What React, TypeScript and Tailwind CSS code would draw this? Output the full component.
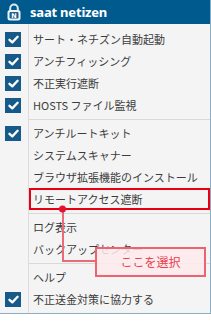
import React from 'react';

type Item = { label: string; checked?: boolean; marked?: boolean };

const GROUPS: Item[][] = [
  [
    { label: 'サート・ネチズン自動起動', checked: true },
    { label: 'アンチフィッシング', checked: true },
    { label: '不正実行遮断', checked: true },
    { label: 'HOSTS ファイル監視', checked: true },
  ],
  [
    { label: 'アンチルートキット', checked: true },
    { label: 'システムスキャナー' },
    { label: 'ブラウザ拡張機能のインストール' },
    { label: 'リモートアクセス遮断', marked: true },
  ],
  [{ label: 'ログ表示' }, { label: 'バックアップセンター' }],
  [{ label: 'ヘルプ' }, { label: '不正送金対策に協力する', checked: true }],
];

function Check() {
  return (
    <div className="w-[16px] h-[15px] bg-[#165a89] flex items-center justify-center">
      <svg width="11" height="11" viewBox="0 0 11 11">
        <polyline points="1.5,5.8 4.3,8.4 9.6,2.8" fill="none" stroke="#fff" strokeWidth="2.3" strokeLinecap="round" strokeLinejoin="round" />
      </svg>
    </div>
  );
}

function Logo() {
  return (
    <svg width="14" height="18" viewBox="0 0 14 18">
      {/* shackle */}
      <path d="M3.2 8 V5.4 a3.8 3.8 0 0 1 7.6 0 V8" fill="none" stroke="#dfe8ef" strokeWidth="2" />
      {/* body */}
      <rect x="0.5" y="7" width="13" height="10.5" rx="2.5" fill="#eef3f7" />
      <rect x="2.5" y="9" width="9" height="6.5" rx="1" fill="#1d5f8e" />
      <text x="7" y="14.6" textAnchor="middle" fontSize="6.5" fontWeight="700" fill="#ffffff" fontFamily="'DejaVu Sans', sans-serif">N</text>
    </svg>
  );
}

export default function App() {
  return (
    <div className="relative w-[211px] h-[333px] bg-white" style={{ fontFamily: "'Noto Sans CJK JP', 'Noto Sans', sans-serif" }}>
      <div className="w-[211px] bg-[#f4f4f4] border-r border-b border-[#8aaec6]">
        {/* ── Header ─────────────────────────────── */}
        <div className="h-[24px] bg-[#005a8e] flex items-center pl-[7px] gap-[9px]">
          <Logo />
          <span className="text-white text-[13px] font-bold leading-none font-['Noto_Sans',sans-serif] tracking-[-0.2px]">saat netizen</span>
        </div>

        {/* ── Menu body ──────────────────────────── */}
        <div className="pt-[4px] pb-[3px] bg-[linear-gradient(to_right,transparent_28px,#dcdcdc_28px,#dcdcdc_29px,transparent_29px)]">
          {GROUPS.map((group, gi) => (
            <div key={gi}>
              {gi > 0 && (
                <div className="h-[6px] flex items-center pl-[29px]">
                  <div className="h-px w-full bg-[#d9d9d9]" />
                </div>
              )}
              {group.map((item) => (
                <div key={item.label} className="flex h-[22px]">
                  <div className="w-[29px] flex items-center pl-[5px]">{item.checked && <Check />}</div>
                  <div
                    className={`flex-1 flex items-center pl-[4px] text-[11px] text-[#3c3c3c] whitespace-nowrap ${
                      item.marked ? 'outline-2 outline-solid outline-[#e60012] -outline-offset-2' : ''
                    }`}
                  >
                    {item.label}
                  </div>
                </div>
              ))}
            </div>
          ))}
        </div>
      </div>

      {/* ── Annotation ─────────────────────────── */}
      <svg className="absolute left-0 top-0 pointer-events-none" width="211" height="333">
        <path d="M63 211 V261 H96" fill="none" stroke="#ea6b77" strokeWidth="2" />
        <circle cx="62.5" cy="209" r="3.5" fill="#e3132f" />
      </svg>
      <div className="absolute left-[95px] top-[247px] w-[111px] h-[30px] border-2 border-[#ec6470] bg-[#fdeaec]/85 flex items-center justify-center text-[12px] text-[#e8404e]">
        ここを選択
      </div>
    </div>
  );
}
